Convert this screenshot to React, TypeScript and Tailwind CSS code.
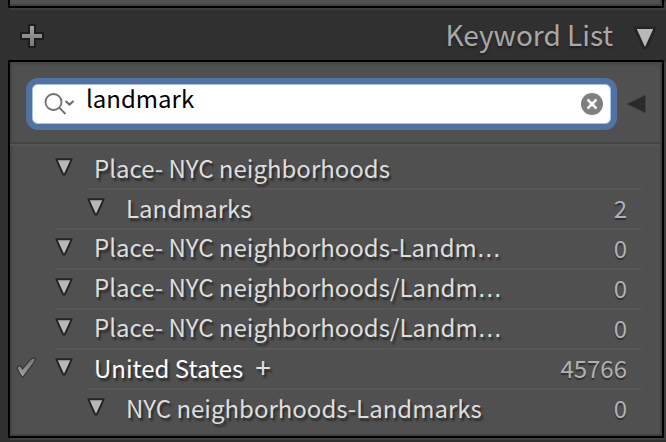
import React, { useState } from 'react';

interface Keyword {
  id: number;
  name: string;
  level: 0 | 1;
  count?: number;
  cut?: boolean;
  active?: boolean;
}

const KEYWORDS: Keyword[] = [
  { id: 1, name: 'Place- NYC neighborhoods', level: 0 },
  { id: 2, name: 'Landmarks', level: 1, count: 2 },
  { id: 3, name: 'Place- NYC neighborhoods-Landm', level: 0, count: 0, cut: true },
  { id: 4, name: 'Place- NYC neighborhoods/Landm', level: 0, count: 0, cut: true },
  { id: 5, name: 'Place- NYC neighborhoods/Landm', level: 0, count: 0, cut: true },
  { id: 6, name: 'United States', level: 0, count: 45766, active: true },
  { id: 7, name: 'NYC neighborhoods-Landmarks', level: 1, count: 0 },
];

const Triangle = ({ size }: { size: number }) => (
  <svg width={size} height={size} viewBox="0 0 20 20" className="block">
    <path d="M1.500 1.500H18.500L11.500 17Q10 20 8.500 17Z" fill="#b8b8b8" stroke="#242424" strokeWidth="2.200" strokeLinejoin="round" />
  </svg>
);

const CheckMark = () => (
  <svg width="20" height="22" viewBox="0 0 20 22" className="block">
    <defs>
      <linearGradient id="check" x1="0" y1="0" x2="0" y2="1">
        <stop offset="0" stopColor="#747474" />
        <stop offset="1" stopColor="#a2a2a2" />
      </linearGradient>
    </defs>
    <path
      d="M1 11Q1.500 8.500 4.500 9L6.500 12L15 2Q17 .5 19 1Q20 3 18 5.500L6.500 20.500Q3 16 1 11Z"
      fill="url(#check)"
      stroke="#303030"
      strokeWidth="1.100"
      strokeLinejoin="round"
    />
  </svg>
);

const KeywordRow = ({ keyword, first }: { keyword: Keyword; first: boolean }) => (
  <li className="flex h-10 items-stretch">
    <div className={keyword.level === 1 ? 'flex w-[78px] shrink-0 items-center pl-1.5' : 'flex w-[46px] shrink-0 items-center pl-1.5'}>
      {keyword.active && <CheckMark />}
    </div>
    <div className={`flex min-w-0 flex-1 items-center border-t-2 pb-0.5 ${first ? 'border-transparent' : 'border-[#575757]'}`}>
      <button type="button" aria-label={`Toggle ${keyword.name}`} className="-ml-px mb-0.5 shrink-0">
        <Triangle size={18} />
      </button>
      <span
        className={`ml-[21px] flex-1 whitespace-nowrap text-2xl leading-9 [text-shadow:2px_3px_2px_#2c2c2c] ${
          keyword.active ? 'text-white' : 'text-[#dedede]'
        }`}
      >
        {keyword.name}
        {keyword.cut && <span className="font-['DejaVu_Sans']">…</span>}
        {keyword.active && <span className="ml-3 text-[28px] leading-8 text-[#dedede]">+</span>}
      </span>
      {keyword.count !== undefined && (
        <span className="pr-[15px] text-2xl leading-9 text-[#b0b0b0] [text-shadow:0_2px_1px_#303030]">{keyword.count}</span>
      )}
    </div>
  </li>
);

export default function App() {
  const [query, setQuery] = useState('landmark');

  return (
    <div className="min-h-screen bg-[#303030] pl-2 font-['Noto_Sans_CJK_SC','Noto_Sans',sans-serif]">
      <div className="mr-0.5 h-2 border-x-2 border-b-2 border-black bg-[#505050] shadow-[2px_2px_0_#3e3e3e,inset_-2px_-2px_0_#414141]" />

      <header className="flex h-[52px] items-center justify-between pl-3 pr-[9px]">
        <button type="button" aria-label="Add keyword" className="mt-1">
          <svg width="24" height="24" viewBox="0 0 24 24" className="block">
            <defs>
              <linearGradient id="plus" x1="0" y1="0" x2="0" y2="1">
                <stop offset="0" stopColor="#a0a0a0" />
                <stop offset="1" stopColor="#777777" />
              </linearGradient>
            </defs>
            <path d="M9 1H15V9H23V15H15V23H9V15H1V9H9Z" fill="url(#plus)" stroke="#1c1c1c" strokeWidth="2" />
          </svg>
        </button>
        <div className="flex items-center gap-5">
          <h1 className="text-[28px] leading-10 text-[#a8a8a8] [text-shadow:0_2px_2px_#202020]">Keyword List</h1>
          <button type="button" aria-label="Collapse panel" className="mt-2">
            <Triangle size={24} />
          </button>
        </div>
      </header>

      <section className="mr-0.5 border-2 border-black bg-[#505050] shadow-[2px_2px_0_#3e3e3e,inset_-2px_-2px_0_#414141,inset_2px_2px_3px_#444444]">
        <div className="flex items-center gap-2.5 pb-3 pl-4 pr-4 pt-4">
          <label className="flex h-[52px] min-w-0 flex-1 items-center rounded-xl border-6 border-[#5272a2] bg-white pl-3 pr-2 shadow-[inset_0_0_0_1px_#a9c5ef]">
            <svg width="32" height="24" viewBox="0 0 32 24" fill="none" stroke="#6e6e6e" strokeWidth="1.800" className="shrink-0">
              <circle cx="9.500" cy="10" r="8" />
              <path d="M15.200 15.700L21.500 22" />
              <path d="M21.500 9L25.500 12.500L29.500 9" strokeWidth="2.200" />
            </svg>
            <input
              type="text"
              aria-label="Filter keywords"
              value={query}
              onChange={(e) => setQuery(e.target.value)}
              className="mb-3 ml-2.5 h-8 min-w-0 flex-1 bg-transparent text-2xl leading-8 text-black outline-none"
            />
            <button type="button" aria-label="Clear filter" onClick={() => setQuery('')} className="shrink-0">
              <svg width="22" height="22" viewBox="0 0 22 22" className="block">
                <circle cx="11" cy="11" r="11" fill="#7f7f7f" />
                <path d="M6.500 6.500L15.500 15.500M15.500 6.500L6.500 15.500" stroke="#ffffff" strokeWidth="2.500" />
              </svg>
            </button>
          </label>
          <button type="button" aria-label="Show filter options" className="shrink-0">
            <svg width="19" height="20" viewBox="0 0 19 20" className="block">
              <path d="M0 10L18.500 1V19Z" fill="#2b2b2b" />
            </svg>
          </button>
        </div>

        <div className="mr-0.5 h-1 border-b-2 border-t-2 border-b-[#555555] border-t-[#434343]" />

        <ul className="pb-2 pr-5 pt-0.5">
          {KEYWORDS.map((keyword, index) => (
            <KeywordRow key={keyword.id} keyword={keyword} first={index === 0} />
          ))}
        </ul>
      </section>
    </div>
  );
}
